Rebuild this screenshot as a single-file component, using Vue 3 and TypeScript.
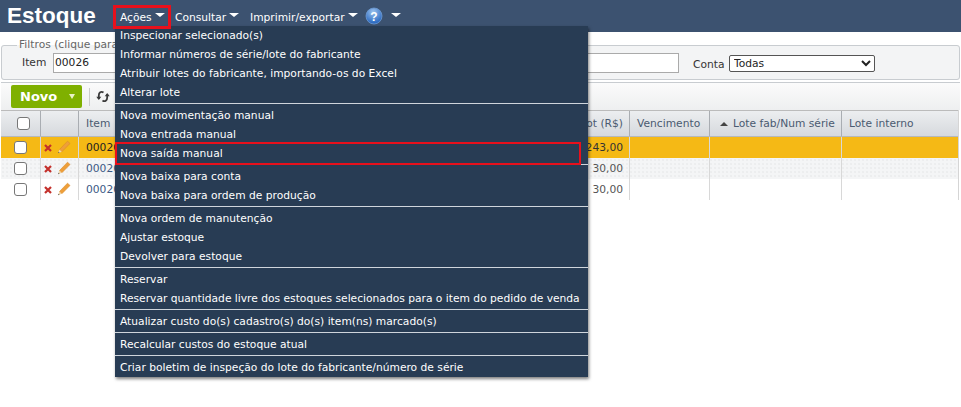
<script setup lang="ts">
const groups: string[][] = [
  ['Inspecionar selecionado(s)', 'Informar números de série/lote do fabricante', 'Atribuir lotes do fabricante, importando-os do Excel', 'Alterar lote'],
  ['Nova movimentação manual', 'Nova entrada manual', 'Nova saída manual'],
  ['Nova baixa para conta', 'Nova baixa para ordem de produção'],
  ['Nova ordem de manutenção', 'Ajustar estoque', 'Devolver para estoque'],
  ['Reservar', 'Reservar quantidade livre dos estoques selecionados para o item do pedido de venda'],
  ['Atualizar custo do(s) cadastro(s) do(s) item(ns) marcado(s)'],
  ['Recalcular custos do estoque atual'],
  ['Criar boletim de inspeção do lote do fabricante/número de série'],
]
const rows = [
  { cls: 'sel', custo: '243,00' },
  { cls: 'alt', custo: '30,00' },
  { cls: '', custo: '30,00' },
]
</script>

<template>
  <div class="page">
    <header class="top">
      <h1 class="title">Estoque</h1>
      <nav class="nav">
        <span class="nav-item first">Ações <i class="tri"></i></span>
        <span class="nav-item second">Consultar <i class="tri"></i></span>
        <span class="nav-item third">Imprimir/exportar <i class="tri"></i></span>
        <svg class="help" width="18" height="18" viewBox="0 0 18 18">
          <defs>
            <radialGradient id="hg" cx="45%" cy="25%" r="75%">
              <stop offset="0" stop-color="#9cc3ee" />
              <stop offset="1" stop-color="#2262bd" />
            </radialGradient>
          </defs>
          <circle cx="9" cy="9" r="8" fill="url(#hg)" stroke="#6f9ad2" stroke-width=".8" />
          <text x="9" y="13.500" text-anchor="middle" class="help-q">?</text>
        </svg>
        <i class="tri last"></i>
      </nav>
    </header>

    <fieldset class="filters">
      <legend>Filtros (clique para ocultar)</legend>
      <div class="filter-row">
        <label class="item-label">Item</label>
        <input class="item-input" value="00026" readonly />
        <label class="conta-label">Conta</label>
        <select class="conta"><option>Todas</option></select>
      </div>
    </fieldset>

    <div class="toolbar">
      <button class="novo">Novo <i class="novo-tri"></i></button>
      <span class="sep"></span>
      <svg class="refresh" width="14" height="13" viewBox="0 0 14 13" fill="none" stroke="#3a3a3a" stroke-width="1.800">
        <path d="M7.500 2.500C5 .8 2.800 2.500 2.800 5.500V9" />
        <path d="M.3 6.800L2.800 10l2.500-3.200" fill="#3a3a3a" stroke="none" />
        <path d="M6.500 10.500C9 12.200 11.200 10.500 11.200 7.500V4" />
        <path d="M8.700 6.200L11.200 3l2.500 3.200" fill="#3a3a3a" stroke="none" />
      </svg>
    </div>

    <div class="table">
      <div class="thead">
        <div class="c c1"><span class="cb head-cb"></span></div>
        <div class="c c2"></div>
        <div class="c c3 th">Item</div>
        <div class="c c4 th right">Custo tot (R$)</div>
        <div class="c c5 th">Vencimento</div>
        <div class="c c6 th"><i class="sort"></i>Lote fab/Num série</div>
        <div class="c c7 th">Lote interno</div>
      </div>
      <div v-for="r in rows" :key="r.custo + r.cls" class="tr" :class="r.cls">
        <div class="c c1"><span class="cb"></span></div>
        <div class="c c2 icons">
          <svg width="8" height="8" viewBox="0 0 8 8"><path d="M1 1l6 6M7 1L1 7" stroke="#c4302b" stroke-width="2.200" /></svg>
          <svg class="pencil" width="14" height="14" viewBox="0 0 14 14">
            <path d="M2.500 9.500L10.500 1.200 13 3.500 4.800 11.800z" fill="#ee9f3a" stroke="#d88a28" stroke-width=".6" />
            <path d="M2.500 9.500L4.800 11.800 1 13.300z" fill="#f3d6a6" />
            <path d="M1.800 11.800L2.500 12.500 1 13.300z" fill="#333" />
          </svg>
        </div>
        <div class="c c3 code">00026</div>
        <div class="c c4 right val">{{ r.custo }}</div>
        <div class="c c5"></div>
        <div class="c c6"></div>
        <div class="c c7"></div>
      </div>
    </div>

    <div class="menu">
      <div v-for="(g, i) in groups" :key="i" class="group">
        <div v-for="t in g" :key="t" class="mi">{{ t }}</div>
      </div>
    </div>
    <div class="mark mark-acoes"></div>
    <div class="mark mark-saida"></div>
  </div>
</template>

<style>
html, body { margin: 0; background: #fff; }
</style>

<style scoped>
.page {
  position: relative;
  width: 961px;
  height: 407px;
  overflow: hidden;
  background: #fff;
  font-family: "DejaVu Sans", sans-serif;
  font-size: 10.700px;
  color: #333;
}
.top {
  height: 32px;
  background: #3c5270;
  display: flex;
  align-items: center;
  padding-left: 7px;
}
.title {
  margin: 0;
  width: 113px;
  font: 700 22.500px/32px "Liberation Sans", sans-serif;
  color: #fff;
}
.nav { display: flex; align-items: center; color: #fff; padding-top: 2px; }
.nav-item { display: flex; align-items: center; gap: 3px; white-space: nowrap; }
.first { width: 55px; }
.second { width: 75px; }
.third { width: 115px; }
.tri {
  width: 0; height: 0;
  border-left: 5px solid transparent;
  border-right: 5px solid transparent;
  border-top: 4px solid #fff;
  margin-top: -4px;
}
.tri.last { margin-left: 8px; }
.help { margin-top: -2px; }
.help-q { font: 700 12px "Liberation Sans", sans-serif; fill: #fff; }
.filters {
  margin: 8px 1px 0 1px;
  padding: 0 0 0 20px;
  height: 40px;
  box-sizing: border-box;
  border: 1px solid #c8ccd0;
  border-radius: 3px;
  background: #f3f4f5;
}
legend { color: #666; padding: 0 2px; margin-left: -5px; line-height: 10px; }
.filter-row { display: flex; align-items: center; height: 25px; }
.item-label { width: 31px; color: #333; }
.item-input {
  width: 626px;
  height: 20px;
  box-sizing: border-box;
  border: 1px solid #aaa;
  padding: 0 1px;
  font: 10.700px "DejaVu Sans", sans-serif;
  color: #222;
  background: #fff;
}
.conta-label { margin: 3px 0 0 14px; width: 36px; color: #333; }
.conta {
  width: 146px;
  height: 17px;
  margin-top: 1px;
  box-sizing: border-box;
  border: 1px solid #555;
  border-radius: 2px;
  background: #fff;
  font: 10.700px "DejaVu Sans", sans-serif;
  color: #222;
}
.toolbar {
  margin: 2px 1px 0 1px;
  height: 28px;
  box-sizing: border-box;
  border-top: 1px solid #c8ccd0;
  background: linear-gradient(#fbfbfb, #eeeff0);
  display: flex;
  align-items: center;
  padding-left: 10px;
}
.novo {
  width: 71px;
  height: 23px;
  border: 0;
  border-radius: 2px;
  background: #7fb000;
  color: #fff;
  font: 700 13px "DejaVu Sans", sans-serif;
  display: flex;
  align-items: center;
  padding: 0 0 0 9px;
  gap: 12px;
}
.novo-tri {
  width: 0; height: 0;
  border-left: 3px solid transparent;
  border-right: 3px solid transparent;
  border-top: 5px solid #eaf3c8;
}
.sep { width: 1px; height: 18px; background: #ccc; margin-left: 7px; }
.refresh { margin-left: 6px; }
.table { margin: 0 1px; width: 958px; border-right: 1px solid #d5d5d5; box-sizing: border-box; }
.thead {
  height: 27px;
  display: flex;
  background: linear-gradient(#eceef0, #d6d9dd);
  border-top: 1px solid #bbb;
  border-bottom: 1px solid #b5b8bc;
  box-sizing: border-box;
}
.tr { height: 21px; display: flex; }
.tr.sel { background: #f5b915; }
.tr.alt {
  background: #f4f5f6 radial-gradient(circle, #e3e4e6 .6px, transparent .8px) 0 0 / 4px 4px;
}
.c {
  box-sizing: border-box;
  border-right: 1px solid #d8d8d8;
  display: flex;
  align-items: center;
  flex: none;
}
.thead .c { border-right-color: #a9adb2; }
.c1 { width: 40px; padding-left: 13px; }
.c2 { width: 38px; }
.c3 { width: 400px; padding-left: 7px; overflow: hidden; }
.c4 { width: 151px; }
.c5 { width: 80px; padding-left: 7px; }
.c6 { width: 132px; padding-left: 10px; }
.c7 { flex: 1; padding-left: 7px; border-right: 0; }
.right { justify-content: flex-end; padding-right: 6px; }
.th { color: #4a5a70; }
.code { color: #3c5a85; }
.sel .code { color: #222; }
.val { color: #555; }
.sel .val { color: #333; }
.icons { padding-left: 3px; gap: 5px; }
.pencil { margin-top: -1px; }
.cb {
  width: 11px;
  height: 11px;
  border: 1px solid #777;
  border-radius: 3px;
  background: #fff;
  display: block;
}
.head-cb { margin-left: 3px; }
.sort {
  width: 0; height: 0;
  border-left: 4px solid transparent;
  border-right: 4px solid transparent;
  border-bottom: 4px solid #444;
  margin-right: 5px;
}
.menu {
  position: absolute;
  left: 115px;
  top: 26px;
  width: 473px;
  background: #283c54;
  color: #fff;
  box-shadow: 1px 2px 3px rgba(0, 0, 0, .5);
}
.group { border-top: 1px solid #cfd5dc; padding: 2px 0 1px; }
.group:first-child { border-top: 0; padding: 0 0 1px; }
.group:last-child { padding-bottom: 0; }
.mi { height: 19px; line-height: 19.800px; padding-left: 5px; white-space: nowrap; }
.mark { position: absolute; border: 2px solid #e8101c; box-sizing: border-box; pointer-events: none; }
.mark-acoes { left: 113px; top: 5px; width: 58px; height: 24px; border-width: 3px; }
.mark-saida { left: 115px; top: 142px; width: 466px; height: 23px; }
</style>
